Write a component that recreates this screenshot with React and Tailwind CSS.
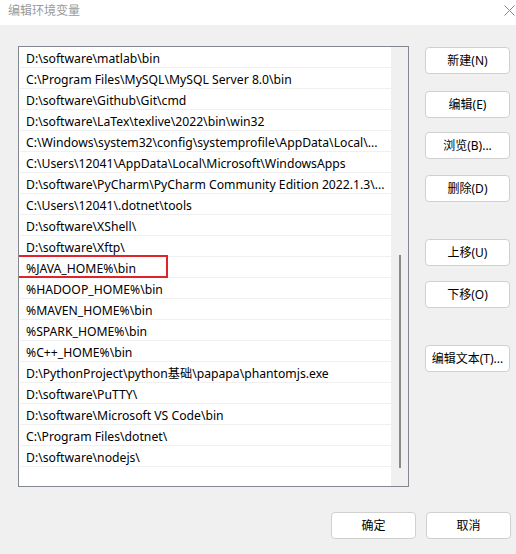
import React from 'react';

const paths = [
    'D:\\software\\matlab\\bin',
    'C:\\Program Files\\MySQL\\MySQL Server 8.0\\bin',
    'D:\\software\\Github\\Git\\cmd',
    'D:\\software\\LaTex\\texlive\\2022\\bin\\win32',
    'C:\\Windows\\system32\\config\\systemprofile\\AppData\\Local\\...',
    'C:\\Users\\12041\\AppData\\Local\\Microsoft\\WindowsApps',
    'D:\\software\\PyCharm\\PyCharm Community Edition 2022.1.3\\...',
    'C:\\Users\\12041\\.dotnet\\tools',
    'D:\\software\\XShell\\',
    'D:\\software\\Xftp\\',
    '%JAVA_HOME%\\bin',
    '%HADOOP_HOME%\\bin',
    '%MAVEN_HOME%\\bin',
    '%SPARK_HOME%\\bin',
    '%C++_HOME%\\bin',
    'D:\\PythonProject\\python基础\\papapa\\phantomjs.exe',
    'D:\\software\\PuTTY\\',
    'D:\\software\\Microsoft VS Code\\bin',
    'C:\\Program Files\\dotnet\\',
    'D:\\software\\nodejs\\',
];

const font = { fontFamily: '"Noto Sans", "Noto Sans CJK SC", sans-serif' };

function Btn({ children, className = '' }) {
    return (
        <button className={`w-[85px] h-[27px] bg-white border border-[#d0d0d0] rounded-[4px] text-[12px] text-black flex items-center justify-center ${className}`}>
            {children}
        </button>
    );
}

export default function App() {
    return (
        <div className="w-[516px] h-[554px] bg-[#f0f0f0] flex flex-col overflow-hidden" style={font}>
            {/* Title bar */}
            <div className="h-[25px] bg-white flex items-center justify-between pl-[8px] pr-[1px] pb-[4px] shrink-0">
                <span className="text-[12px] text-[#9a9a9a] leading-none">编辑环境变量</span>
                <svg width="11" height="11" viewBox="0 0 11 11">
                    <path d="M0.5 0.5L10.5 10.5M10.5 0.5L0.5 10.5" stroke="#8a8a8a" strokeWidth="1" />
                </svg>
            </div>

            {/* Body */}
            <div className="flex pl-[18px] pt-[21px] gap-[16px]">
                {/* List */}
                <div className="w-[391px] h-[441px] border border-[#828790] bg-white flex">
                    <div className="flex-1 pl-[1px] overflow-hidden">
                        {paths.map((p, i) => (
                            <div key={i} className="relative h-[21px] border-b border-[#f0f0f0] flex items-center pl-[6px] pt-[4px] text-[12.2px] leading-none text-black whitespace-nowrap">
                                {p}
                                {i === 10 && (
                                    <div className="absolute -top-[2px] -left-[3px] w-[151px] h-[23px] border-2 border-[#e0242c]" />
                                )}
                            </div>
                        ))}
                    </div>
                    <div className="w-[17px] bg-[#f0f0f0] flex justify-center pt-[208px]">
                        <div className="w-[2px] h-[213px] bg-[#8a8a8a]" />
                    </div>
                </div>

                {/* Side buttons */}
                <div className="flex flex-col pt-[1px]">
                    <Btn>新建(N)</Btn>
                    <Btn className="mt-[17px]">编辑(E)</Btn>
                    <Btn className="mt-[14px]">浏览(B)...</Btn>
                    <Btn className="mt-[16px]">删除(D)</Btn>
                    <Btn className="mt-[37px]">上移(U)</Btn>
                    <Btn className="mt-[15px]">下移(O)</Btn>
                    <Btn className="mt-[37px]">编辑文本(T)...</Btn>
                </div>
            </div>

            {/* Footer */}
            <div className="flex justify-end gap-[10px] pr-[5px] mt-[25px]">
                <Btn className="h-[26px]">确定</Btn>
                <Btn className="h-[26px]">取消</Btn>
            </div>
        </div>
    );
}
